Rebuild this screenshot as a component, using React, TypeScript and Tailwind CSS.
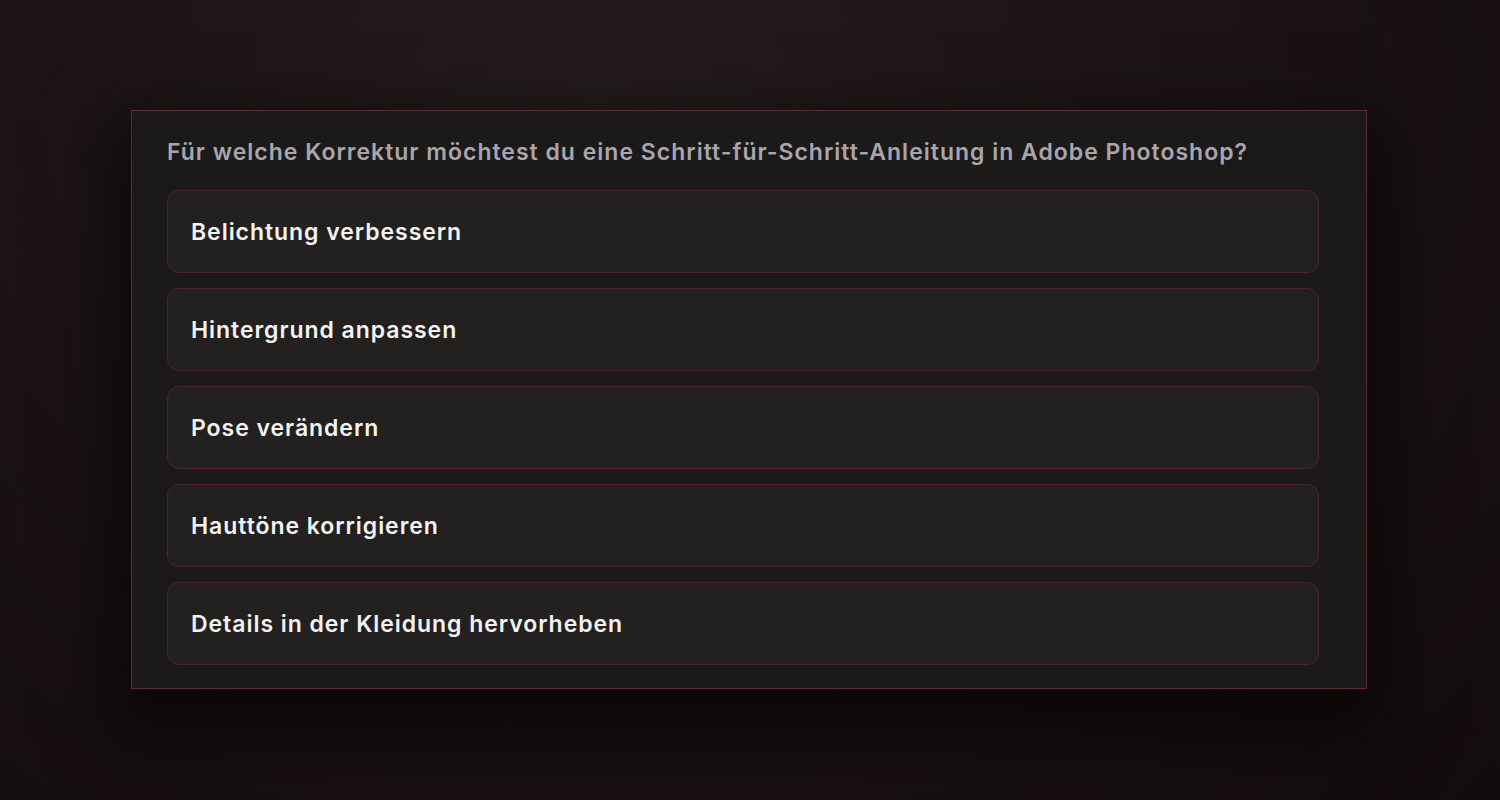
import React from 'react';

const options = [
  'Belichtung verbessern',
  'Hintergrund anpassen',
  'Pose verändern',
  'Hauttöne korrigieren',
  'Details in der Kleidung hervorheben',
];

export default function App() {
  return (
    <div
      className="w-[1500px] h-[800px] overflow-hidden bg-[#140d0e] bg-[radial-gradient(ellipse_at_40%_10%,#231b1c_0%,#1b1315_45%,#130c0d_100%)] pt-[110px] pl-[131px]"
      style={{ fontFamily: 'Inter, "Noto Sans", sans-serif' }}
    >
      <div className="w-[1236px] h-[579px] border border-[#5e2a33] bg-[#1c1a19] pt-[25px] pl-[35px] pr-[47px] shadow-[0_30px_60px_20px_rgba(0,0,0,0.55)]">
        <h2 className="text-[23px] leading-[32px] font-semibold text-[#a8a5ae] tracking-[1px]">
          Für welche Korrektur möchtest du eine Schritt-für-Schritt-Anleitung in Adobe Photoshop?
        </h2>
        <div className="mt-[22px] flex flex-col gap-[15.5px]">
          {options.map((o) => (
            <button
              key={o}
              className="h-[82.5px] w-full rounded-[12px] border border-[#4f232b] bg-[#222120] px-[23px] pt-[2px] text-left text-[23px] font-semibold text-[#f2f2f2] tracking-[0.95px]"
            >
              {o}
            </button>
          ))}
        </div>
      </div>
    </div>
  );
}
